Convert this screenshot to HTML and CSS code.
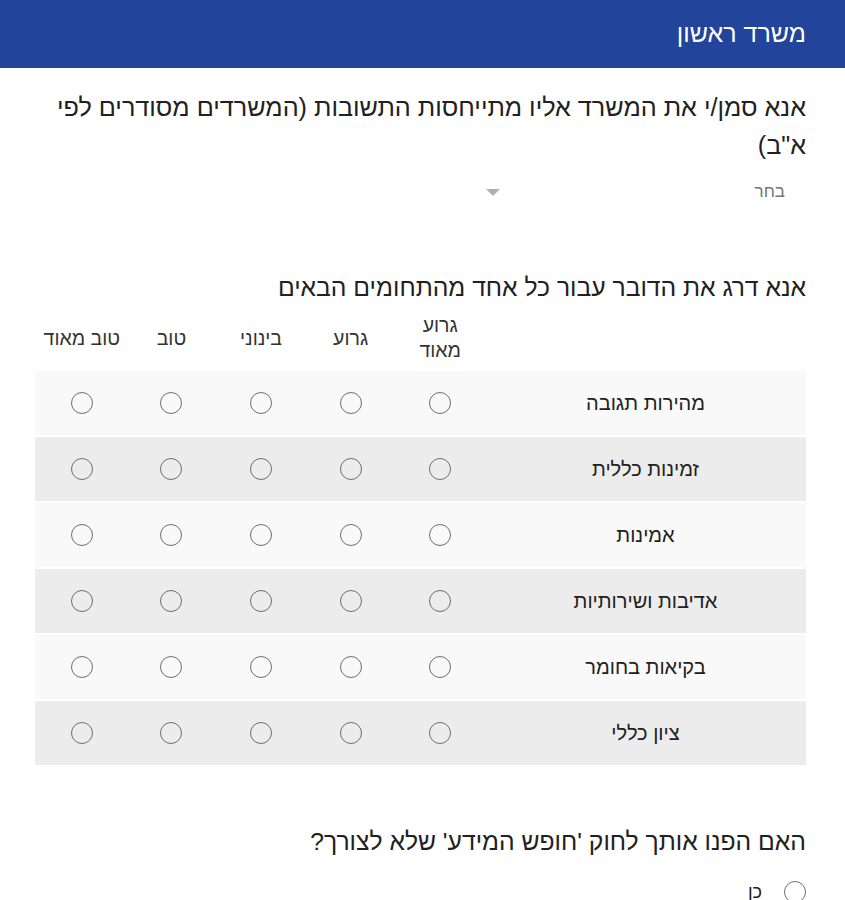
FILE: index.html
```html
<!DOCTYPE html>
<html lang="he" dir="rtl">
<head>
<meta charset="utf-8">
<title>משרד ראשון</title>
<link rel="stylesheet" href="styles.css">
</head>
<body>
<header class="topbar">משרד ראשון</header>
<main class="form">
  <section class="question q-first">
    <h2 class="q-title">אנא סמן/י את המשרד אליו מתייחסות התשובות (המשרדים מסודרים לפי א"ב)</h2>
    <div class="dropdown">
      <span class="dropdown-value">בחר</span>
      <span class="dropdown-arrow"></span>
    </div>
  </section>

  <section class="question q-grid">
    <h2 class="q-title">אנא דרג את הדובר עבור כל אחד מהתחומים הבאים</h2>
    <div class="grid">
      <div class="grid-row grid-head">
        <div class="cell label-cell"></div>
        <div class="cell">גרוע<br>מאוד</div>
        <div class="cell">גרוע</div>
        <div class="cell">בינוני</div>
        <div class="cell">טוב</div>
        <div class="cell">טוב מאוד</div>
      </div>
      <div class="grid-row light">
        <div class="cell label-cell">מהירות תגובה</div>
        <div class="cell"><span class="radio"></span></div>
        <div class="cell"><span class="radio"></span></div>
        <div class="cell"><span class="radio"></span></div>
        <div class="cell"><span class="radio"></span></div>
        <div class="cell"><span class="radio"></span></div>
      </div>
      <div class="grid-row dark">
        <div class="cell label-cell">זמינות כללית</div>
        <div class="cell"><span class="radio"></span></div>
        <div class="cell"><span class="radio"></span></div>
        <div class="cell"><span class="radio"></span></div>
        <div class="cell"><span class="radio"></span></div>
        <div class="cell"><span class="radio"></span></div>
      </div>
      <div class="grid-row light">
        <div class="cell label-cell">אמינות</div>
        <div class="cell"><span class="radio"></span></div>
        <div class="cell"><span class="radio"></span></div>
        <div class="cell"><span class="radio"></span></div>
        <div class="cell"><span class="radio"></span></div>
        <div class="cell"><span class="radio"></span></div>
      </div>
      <div class="grid-row dark">
        <div class="cell label-cell">אדיבות ושירותיות</div>
        <div class="cell"><span class="radio"></span></div>
        <div class="cell"><span class="radio"></span></div>
        <div class="cell"><span class="radio"></span></div>
        <div class="cell"><span class="radio"></span></div>
        <div class="cell"><span class="radio"></span></div>
      </div>
      <div class="grid-row light">
        <div class="cell label-cell">בקיאות בחומר</div>
        <div class="cell"><span class="radio"></span></div>
        <div class="cell"><span class="radio"></span></div>
        <div class="cell"><span class="radio"></span></div>
        <div class="cell"><span class="radio"></span></div>
        <div class="cell"><span class="radio"></span></div>
      </div>
      <div class="grid-row dark">
        <div class="cell label-cell">ציון כללי</div>
        <div class="cell"><span class="radio"></span></div>
        <div class="cell"><span class="radio"></span></div>
        <div class="cell"><span class="radio"></span></div>
        <div class="cell"><span class="radio"></span></div>
        <div class="cell"><span class="radio"></span></div>
      </div>
    </div>
  </section>

  <section class="question q-last">
    <h2 class="q-title">האם הפנו אותך לחוק 'חופש המידע' שלא לצורך?</h2>
    <div class="option"><span class="radio"></span><span class="option-text">כן</span></div>
  </section>
</main>
</body>
</html>
```

FILE: styles.css
```css
html, body {
  margin: 0;
  padding: 0;
  background: #ffffff;
}
body {
  font-family: "Liberation Sans", Arial, sans-serif;
  color: #212121;
  direction: rtl;
}
.topbar {
  height: 68px;
  background: #22449a;
  color: #ffffff;
  font-size: 25px;
  display: flex;
  align-items: center;
  padding: 0 39px 2px;
  box-sizing: border-box;
}
.form {
  padding: 0 39px 0 35px;
}
.q-title {
  margin: 0;
  font-weight: normal;
  font-size: 24.7px;
  line-height: 38px;
  color: #212121;
}
.q-first {
  padding-top: 20px;
}
.q-first .q-title {
  font-size: 25.2px;
}
.dropdown {
  width: 326px;
  height: 40px;
  margin-top: 8px;
  display: flex;
  align-items: center;
  justify-content: space-between;
  padding: 0 21px 0 6px;
  box-sizing: border-box;
}
.dropdown-value {
  font-size: 17px;
  color: #757575;
}
.dropdown-arrow {
  width: 0;
  height: 0;
  border-left: 7px solid transparent;
  border-right: 7px solid transparent;
  border-top: 7px solid #b0b0b0;
}
.q-grid {
  margin-top: 57px;
}
.grid {
  display: flex;
  flex-direction: column;
  gap: 2px;
}
.grid-row {
  display: grid;
  grid-template-columns: 321px repeat(5, 1fr);
  height: 64px;
  padding-left: 2px;
}
.grid-head {
  height: 62px;
  font-size: 19.5px;
  line-height: 25px;
  color: #333333;
}
.light { background: #f9f9f9; }
.dark { background: #ececec; }
.cell {
  display: flex;
  align-items: center;
  justify-content: center;
  text-align: center;
}
.label-cell {
  font-size: 20px;
  color: #212121;
}
.radio {
  width: 20px;
  height: 20px;
  border: 1.5px solid #6e6e6e;
  border-radius: 50%;
  box-sizing: content-box;
  display: inline-block;
}
.q-last {
  margin-top: 58px;
}
.option {
  display: flex;
  align-items: center;
  gap: 22px;
  margin-top: 20px;
}
.option-text {
  font-size: 18px;
}
```
